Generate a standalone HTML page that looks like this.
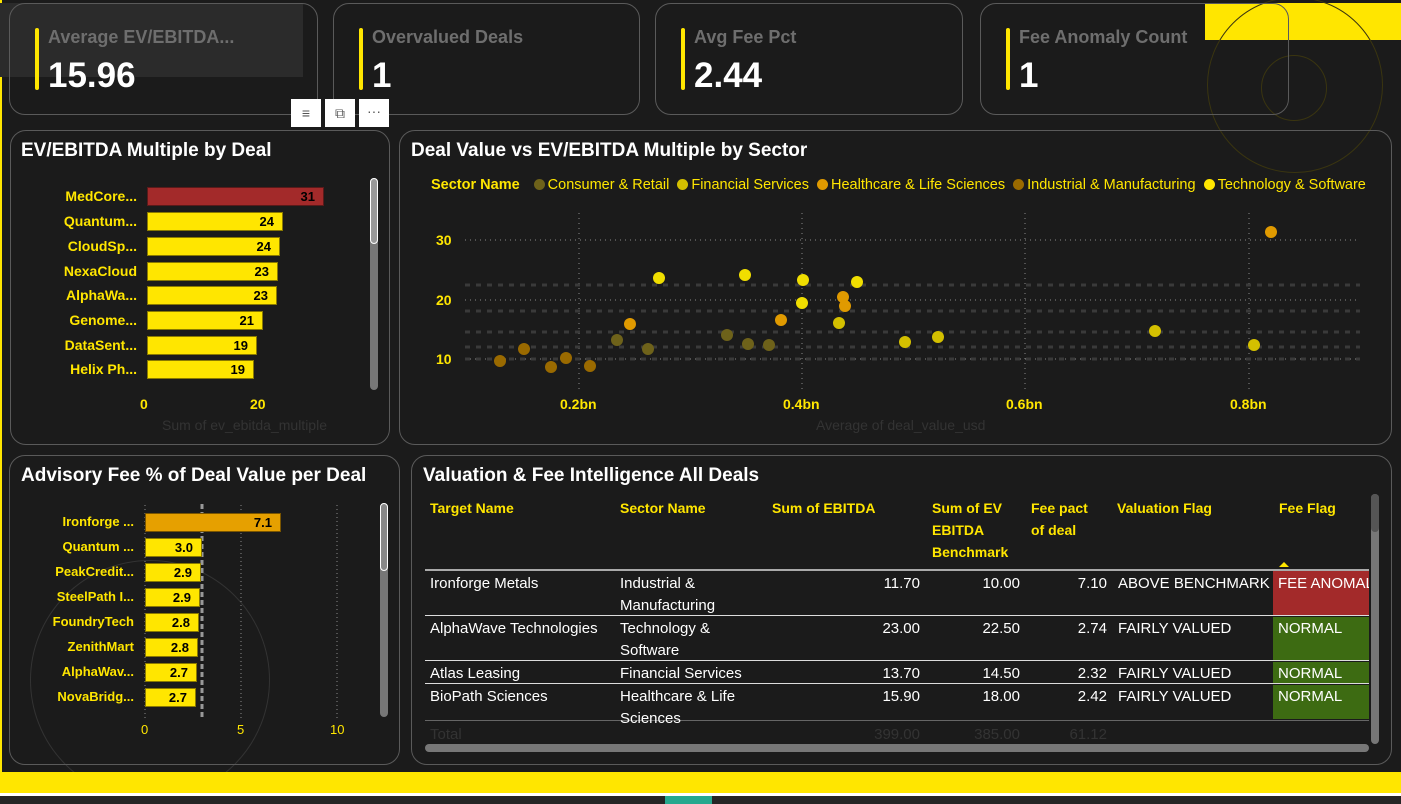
<!DOCTYPE html>
<html><head><meta charset="utf-8"><style>
*{margin:0;padding:0;box-sizing:border-box}
body{width:1401px;height:804px;background:#1b1b1b;position:relative;overflow:hidden;font-family:"Liberation Sans",sans-serif;color:#fff}
.a{position:absolute}
.card{position:absolute;border:1px solid #5a5a5a;border-radius:16px}
.kt{position:absolute;left:13px;top:23px;font-size:18px;font-weight:bold;color:#6e6e6e}
.kv{position:absolute;left:13px;top:52px;font-size:35px;font-weight:bold;color:#fff}
.kb{position:absolute;left:0;top:24px;width:4px;height:62px;background:#ffe600;border-radius:2px}
.pt{position:absolute;font-size:19px;font-weight:bold;color:#fff}
.lab{position:absolute;font-size:14px;font-weight:bold;color:#ffe600;text-align:right}
.bar{position:absolute;background:#ffe600;border:1px solid #8a7a00;color:#000;font-weight:bold;font-size:13px;text-align:right;padding-right:8px;line-height:17px}
.dot{position:absolute;width:12px;height:12px;border-radius:50%;margin:-6px 0 0 -6px}
.ld{display:inline-block;width:11px;height:11px;border-radius:50%;margin:0 3px 0 8px;vertical-align:-1px}
.th{position:absolute;top:497px;font-size:14px;font-weight:bold;color:#ffe600;line-height:22px}
.td{position:absolute;font-size:15px;color:#fff;line-height:22px}
.r{text-align:right}
</style></head><body>
<div class="a" style="left:0;top:0;width:2px;height:772px;background:#ffe600"></div>
<div class="a" style="left:1205px;top:3px;width:196px;height:37px;background:#ffe600"></div>
<div class="a" style="left:1207px;top:-3px;width:176px;height:176px;border:1px solid #3a3510;border-radius:50%"></div>
<div class="a" style="left:1261px;top:55px;width:66px;height:66px;border:1px solid #3a3510;border-radius:50%"></div>
<div class="a" style="left:30px;top:560px;width:240px;height:240px;border:1px solid #333;border-radius:50%"></div>
<div class="a" style="left:0;top:772px;width:1401px;height:21px;background:#ffe600"></div>
<div class="a" style="left:0;top:793px;width:1401px;height:3px;background:#fff"></div>
<div class="a" style="left:0;top:796px;width:1401px;height:8px;background:#252525"></div>
<div class="a" style="left:665px;top:796px;width:47px;height:8px;background:#26a88e"></div>

<div class="a" style="left:0;top:3px;width:303px;height:74px;background:#2b2b2b"></div>
<div class="card" style="left:9px;top:3px;width:309px;height:112px"><div class="kb" style="left:25px"></div><div class="kt" style="left:38px">Average EV/EBITDA...</div><div class="kv" style="left:38px">15.96</div></div>
<div class="card" style="left:333px;top:3px;width:307px;height:112px"><div class="kb" style="left:25px"></div><div class="kt" style="left:38px">Overvalued Deals</div><div class="kv" style="left:38px">1</div></div>
<div class="card" style="left:655px;top:3px;width:308px;height:112px"><div class="kb" style="left:25px"></div><div class="kt" style="left:38px">Avg Fee Pct</div><div class="kv" style="left:38px">2.44</div></div>
<div class="card" style="left:980px;top:3px;width:309px;height:112px"><div class="kb" style="left:25px"></div><div class="kt" style="left:38px">Fee Anomaly Count</div><div class="kv" style="left:38px">1</div></div>
<div class="a" style="left:291px;top:99px;width:30px;height:28px;background:#fff;color:#555;font-size:14px;text-align:center;line-height:28px">≡</div>
<div class="a" style="left:325px;top:99px;width:30px;height:28px;background:#fff;color:#555;font-size:14px;text-align:center;line-height:28px">⧉</div>
<div class="a" style="left:359px;top:99px;width:30px;height:28px;background:#fff;color:#555;font-size:14px;text-align:center;line-height:24px">···</div>

<div class="card" style="left:10px;top:130px;width:380px;height:315px"></div>
<div class="pt" style="left:21px;top:140px">EV/EBITDA Multiple by Deal</div>
<div class="lab" style="left:40px;top:188px;width:97px">MedCore...</div>
<div class="bar" style="left:147px;top:187px;width:177px;background:#a32a2a;border-color:#5a1a1a">31</div>
<div class="lab" style="left:40px;top:213px;width:97px">Quantum...</div><div class="bar" style="left:147px;top:212px;width:136px">24</div>
<div class="lab" style="left:40px;top:238px;width:97px">CloudSp...</div><div class="bar" style="left:147px;top:237px;width:133px">24</div>
<div class="lab" style="left:40px;top:263px;width:97px">NexaCloud</div><div class="bar" style="left:147px;top:262px;width:131px">23</div>
<div class="lab" style="left:40px;top:287px;width:97px">AlphaWa...</div><div class="bar" style="left:147px;top:286px;width:130px">23</div>
<div class="lab" style="left:40px;top:312px;width:97px">Genome...</div><div class="bar" style="left:147px;top:311px;width:116px">21</div>
<div class="lab" style="left:40px;top:337px;width:97px">DataSent...</div><div class="bar" style="left:147px;top:336px;width:110px">19</div>
<div class="lab" style="left:40px;top:361px;width:97px">Helix Ph...</div><div class="bar" style="left:147px;top:360px;width:107px">19</div>
<div class="lab" style="left:140px;top:396px;color:#ffe600">0</div>
<div class="lab" style="left:250px;top:396px">20</div>
<div class="a" style="left:162px;top:417px;font-size:14px;color:#333">Sum of ev_ebitda_multiple</div>
<div class="a" style="left:370px;top:178px;width:8px;height:212px;background:#777;border-radius:4px"></div>
<div class="a" style="left:370px;top:178px;width:8px;height:66px;background:#999;border:1px solid #fff;border-radius:4px"></div>

<div class="card" style="left:399px;top:130px;width:993px;height:315px"></div>
<div class="pt" style="left:411px;top:140px">Deal Value vs EV/EBITDA Multiple by Sector</div>
<div class="a" style="left:431px;top:177px;font-size:14.5px;color:#ffe600;white-space:nowrap"><b>Sector Name</b><span class="ld" style="background:#6e621a;margin-left:14px"></span>Consumer &amp; Retail<span class="ld" style="background:#d4c000"></span>Financial Services<span class="ld" style="background:#e09a00"></span>Healthcare &amp; Life Sciences<span class="ld" style="background:#9a6a00"></span>Industrial &amp; Manufacturing<span class="ld" style="background:#ffe600"></span>Technology &amp; Software</div>
<svg class="a" style="left:0;top:0" width="1401" height="450">
<g stroke="#888" stroke-dasharray="1,4" stroke-width="1">
<line x1="465" y1="240" x2="1360" y2="240"/><line x1="465" y1="300" x2="1360" y2="300"/><line x1="465" y1="359" x2="1360" y2="359"/>
<line x1="579" y1="213" x2="579" y2="390"/><line x1="802" y1="213" x2="802" y2="390"/><line x1="1025" y1="213" x2="1025" y2="390"/><line x1="1249" y1="213" x2="1249" y2="390"/>
</g>
<g stroke="#3a3a3a" stroke-dasharray="5,6" stroke-width="3">
<line x1="465" y1="285" x2="1360" y2="285"/><line x1="465" y1="311" x2="1360" y2="311"/><line x1="465" y1="332" x2="1360" y2="332"/><line x1="465" y1="347" x2="1360" y2="347"/><line x1="465" y1="359" x2="1360" y2="359"/>
</g>
</svg>
<div class="lab" style="left:436px;top:232px">30</div>
<div class="lab" style="left:436px;top:292px">20</div>
<div class="lab" style="left:436px;top:351px">10</div>
<div class="lab" style="left:560px;top:396px">0.2bn</div>
<div class="lab" style="left:783px;top:396px">0.4bn</div>
<div class="lab" style="left:1006px;top:396px">0.6bn</div>
<div class="lab" style="left:1230px;top:396px">0.8bn</div>
<div class="a" style="left:816px;top:417px;font-size:14px;color:#333">Average of deal_value_usd</div>
<div class="dot" style="left:500px;top:361px;background:#9a6a00"></div>
<div class="dot" style="left:524px;top:349px;background:#9a6a00"></div>
<div class="dot" style="left:551px;top:367px;background:#9a6a00"></div>
<div class="dot" style="left:566px;top:358px;background:#9a6a00"></div>
<div class="dot" style="left:590px;top:366px;background:#9a6a00"></div>
<div class="dot" style="left:617px;top:340px;background:#6e621a"></div>
<div class="dot" style="left:630px;top:324px;background:#e09a00"></div>
<div class="dot" style="left:648px;top:349px;background:#6e621a"></div>
<div class="dot" style="left:659px;top:278px;background:#f0de00"></div>
<div class="dot" style="left:727px;top:335px;background:#6e621a"></div>
<div class="dot" style="left:745px;top:275px;background:#f0de00"></div>
<div class="dot" style="left:748px;top:344px;background:#6e621a"></div>
<div class="dot" style="left:769px;top:345px;background:#6e621a"></div>
<div class="dot" style="left:781px;top:320px;background:#e09a00"></div>
<div class="dot" style="left:803px;top:280px;background:#f0de00"></div>
<div class="dot" style="left:802px;top:303px;background:#f0de00"></div>
<div class="dot" style="left:839px;top:323px;background:#d4c000"></div>
<div class="dot" style="left:843px;top:297px;background:#e09a00"></div>
<div class="dot" style="left:845px;top:306px;background:#e09a00"></div>
<div class="dot" style="left:857px;top:282px;background:#f0de00"></div>
<div class="dot" style="left:905px;top:342px;background:#d4c000"></div>
<div class="dot" style="left:938px;top:337px;background:#d4c000"></div>
<div class="dot" style="left:1155px;top:331px;background:#d4c000"></div>
<div class="dot" style="left:1254px;top:345px;background:#d4c000"></div>
<div class="dot" style="left:1271px;top:232px;background:#e09a00"></div>

<div class="card" style="left:9px;top:455px;width:391px;height:310px"></div>
<div class="pt" style="left:21px;top:465px">Advisory Fee % of Deal Value per Deal</div>
<svg class="a" style="left:0;top:0" width="400" height="730">
<g stroke="#888" stroke-dasharray="1,3"><line x1="145" y1="505" x2="145" y2="718"/><line x1="241" y1="505" x2="241" y2="718"/><line x1="337" y1="505" x2="337" y2="718"/></g>
<line x1="202" y1="504" x2="202" y2="718" stroke="#999" stroke-width="3" stroke-dasharray="5,3"/>
</svg>
<div class="lab" style="left:30px;top:514px;width:104px;font-size:13px">Ironforge ...</div><div class="bar" style="left:145px;top:513px;width:136px;background:#e6a000;border-color:#7a5500">7.1</div>
<div class="lab" style="left:30px;top:539px;width:104px;font-size:13px">Quantum ...</div><div class="bar" style="left:145px;top:538px;width:57px">3.0</div>
<div class="lab" style="left:30px;top:564px;width:104px;font-size:13px">PeakCredit...</div><div class="bar" style="left:145px;top:563px;width:56px">2.9</div>
<div class="lab" style="left:30px;top:589px;width:104px;font-size:13px">SteelPath I...</div><div class="bar" style="left:145px;top:588px;width:55px">2.9</div>
<div class="lab" style="left:30px;top:614px;width:104px;font-size:13px">FoundryTech</div><div class="bar" style="left:145px;top:613px;width:54px">2.8</div>
<div class="lab" style="left:30px;top:639px;width:104px;font-size:13px">ZenithMart</div><div class="bar" style="left:145px;top:638px;width:53px">2.8</div>
<div class="lab" style="left:30px;top:664px;width:104px;font-size:13px">AlphaWav...</div><div class="bar" style="left:145px;top:663px;width:52px">2.7</div>
<div class="lab" style="left:30px;top:689px;width:104px;font-size:13px">NovaBridg...</div><div class="bar" style="left:145px;top:688px;width:51px">2.7</div>
<div class="a" style="left:141px;top:722px;font-size:13px;color:#ffe600">0</div>
<div class="a" style="left:237px;top:722px;font-size:13px;color:#ffe600">5</div>
<div class="a" style="left:330px;top:722px;font-size:13px;color:#ffe600">10</div>
<div class="a" style="left:380px;top:503px;width:8px;height:214px;background:#777;border-radius:4px"></div>
<div class="a" style="left:380px;top:503px;width:8px;height:68px;background:#888;border:1px solid #fff;border-radius:4px"></div>

<div class="card" style="left:411px;top:455px;width:981px;height:310px"></div>
<div class="pt" style="left:423px;top:465px">Valuation &amp; Fee Intelligence All Deals</div>
<div class="th" style="left:430px">Target Name</div>
<div class="th" style="left:620px">Sector Name</div>
<div class="th" style="left:772px">Sum of EBITDA</div>
<div class="th" style="left:932px">Sum of EV<br>EBITDA<br>Benchmark</div>
<div class="th" style="left:1031px">Fee pact<br>of deal</div>
<div class="th" style="left:1117px">Valuation Flag</div>
<div class="th" style="left:1279px">Fee Flag</div>
<div class="a" style="left:1279px;top:562px;width:0;height:0;border-left:5px solid transparent;border-right:5px solid transparent;border-bottom:5px solid #ffe600"></div>
<div class="a" style="left:425px;top:569px;width:944px;height:2px;background:#aaa"></div>
<div class="a" style="left:1273px;top:571px;width:96px;height:44px;background:#a32a2a"></div>
<div class="a" style="left:1273px;top:617px;width:96px;height:43px;background:#3d6b12"></div>
<div class="a" style="left:1273px;top:662px;width:96px;height:21px;background:#3d6b12"></div>
<div class="a" style="left:1273px;top:685px;width:96px;height:34px;background:#3d6b12"></div>
<div class="a" style="left:425px;top:615px;width:944px;height:1px;background:#ddd"></div>
<div class="a" style="left:425px;top:660px;width:944px;height:1px;background:#ddd"></div>
<div class="a" style="left:425px;top:683px;width:944px;height:1px;background:#ddd"></div>
<div class="a" style="left:425px;top:720px;width:944px;height:1px;background:#666"></div>
<div style="position:absolute;left:0;top:0;width:1369px;height:728px;overflow:hidden">
<div class="td" style="left:430px;top:573px">Ironforge Metals</div><div class="td" style="left:620px;top:573px">Industrial &amp;<br>Manufacturing</div><div class="td r" style="left:800px;top:573px;width:120px">11.70</div><div class="td r" style="left:940px;top:573px;width:80px">10.00</div><div class="td r" style="left:1040px;top:573px;width:67px">7.10</div><div class="td" style="left:1118px;top:573px">ABOVE BENCHMARK</div><div class="td" style="left:1278px;top:573px;white-space:nowrap;width:91px;overflow:hidden">FEE ANOMALY</div>
<div class="td" style="left:430px;top:618px">AlphaWave Technologies</div><div class="td" style="left:620px;top:618px">Technology &amp;<br>Software</div><div class="td r" style="left:800px;top:618px;width:120px">23.00</div><div class="td r" style="left:940px;top:618px;width:80px">22.50</div><div class="td r" style="left:1040px;top:618px;width:67px">2.74</div><div class="td" style="left:1118px;top:618px">FAIRLY VALUED</div><div class="td" style="left:1278px;top:618px">NORMAL</div>
<div class="td" style="left:430px;top:663px">Atlas Leasing</div><div class="td" style="left:620px;top:663px">Financial Services</div><div class="td r" style="left:800px;top:663px;width:120px">13.70</div><div class="td r" style="left:940px;top:663px;width:80px">14.50</div><div class="td r" style="left:1040px;top:663px;width:67px">2.32</div><div class="td" style="left:1118px;top:663px">FAIRLY VALUED</div><div class="td" style="left:1278px;top:663px">NORMAL</div>
<div class="td" style="left:430px;top:686px">BioPath Sciences</div><div class="td" style="left:620px;top:686px">Healthcare &amp; Life<br>Sciences</div><div class="td r" style="left:800px;top:686px;width:120px">15.90</div><div class="td r" style="left:940px;top:686px;width:80px">18.00</div><div class="td r" style="left:1040px;top:686px;width:67px">2.42</div><div class="td" style="left:1118px;top:686px">FAIRLY VALUED</div><div class="td" style="left:1278px;top:686px">NORMAL</div>
</div>
<div class="td" style="left:430px;top:724px;color:#333">Total</div><div class="td r" style="left:800px;top:724px;width:120px;color:#333">399.00</div><div class="td r" style="left:940px;top:724px;width:80px;color:#333">385.00</div><div class="td r" style="left:1040px;top:724px;width:67px;color:#333">61.12</div>
<div class="a" style="left:425px;top:744px;width:944px;height:8px;background:#777;border-radius:4px"></div>
<div class="a" style="left:1371px;top:494px;width:8px;height:250px;background:#777;border-radius:4px"></div>
<div class="a" style="left:1371px;top:494px;width:8px;height:38px;background:#555;border-radius:4px"></div>
</body></html>
